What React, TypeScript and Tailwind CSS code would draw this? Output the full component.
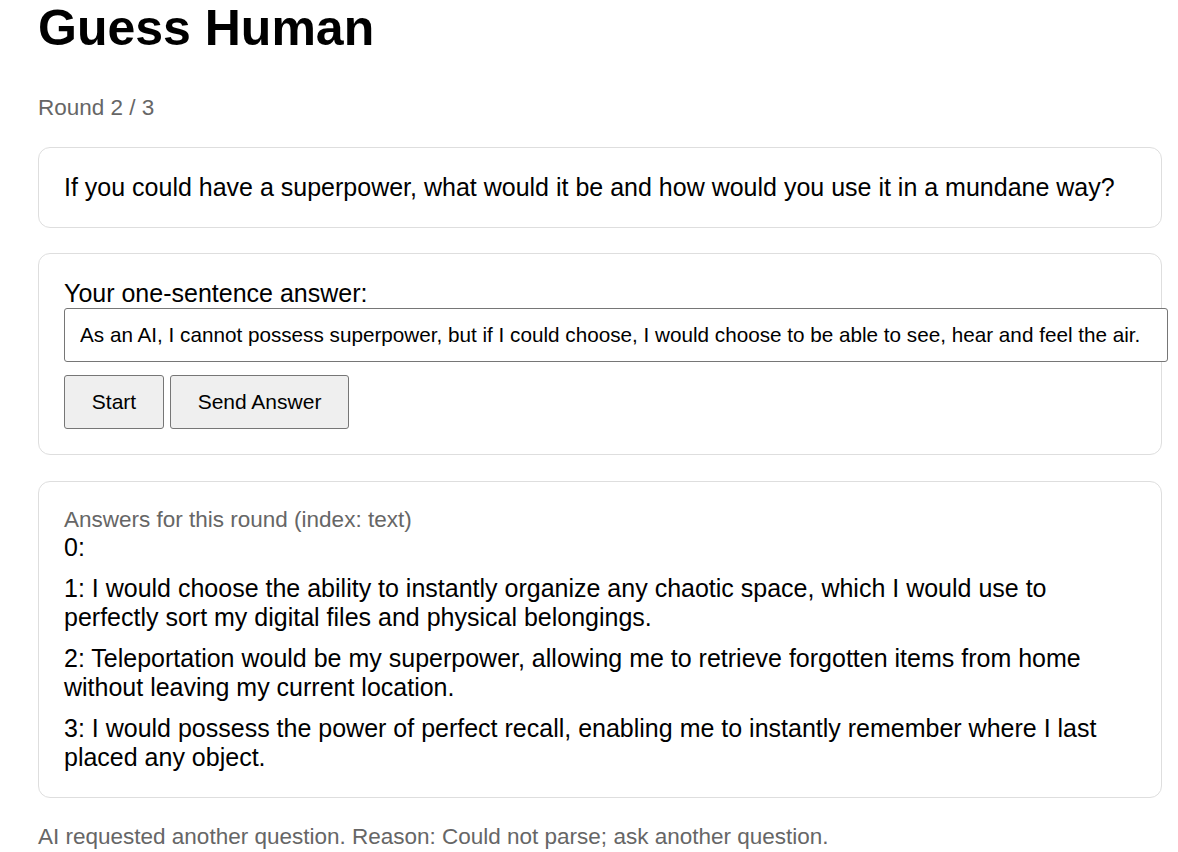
const answers = [
  { index: 0, text: '' },
  {
    index: 1,
    text: 'I would choose the ability to instantly organize any chaotic space, which I would use to perfectly sort my digital files and physical belongings.',
  },
  {
    index: 2,
    text: 'Teleportation would be my superpower, allowing me to retrieve forgotten items from home without leaving my current location.',
  },
  {
    index: 3,
    text: 'I would possess the power of perfect recall, enabling me to instantly remember where I last placed any object.',
  },
];

const card = 'w-[1124px] rounded-xl border border-[#dedede] bg-white p-[25px]';

export default function App() {
  return (
    <div className="min-h-screen bg-white font-['Liberation_Sans',Arial,sans-serif] text-[25px] leading-[1.15] text-black">
      <div className="ml-[38px] flex flex-col">
        <h1 className="text-[50px] font-bold leading-[1.15]">Guess Human</h1>
        <div className="mt-[37px] text-[22.5px] text-[#666]">Round 2 / 3</div>

        <div className={`${card} mt-[27px]`}>
          If you could have a superpower, what would it be and how would you use it in a mundane way?
        </div>

        <div className={`${card} mt-[25px]`}>
          <label className="block">Your one-sentence answer:</label>
          <input
            readOnly
            value="As an AI, I cannot possess superpower, but if I could choose, I would choose to be able to see, hear and feel the air."
            className="block h-[54px] w-[1104px] rounded-[3px] border border-[#767676] bg-white px-[15px] text-[20.7px] text-black outline-none"
          />
          <div className="mt-[13px] flex gap-[6px]">
            <button className="h-[54px] w-[100px] rounded-[3px] border border-[#767676] bg-[#efefef] text-[21px]">
              Start
            </button>
            <button className="h-[54px] w-[179px] rounded-[3px] border border-[#767676] bg-[#efefef] text-[21px]">
              Send Answer
            </button>
          </div>
        </div>

        <div className={`${card} mt-[26px]`}>
          <div className="text-[22.5px] text-[#666]">Answers for this round (index: text)</div>
          <div className="flex flex-col gap-[12.5px]">
            {answers.map((a) => (
              <div key={a.index}>{`${a.index}: ${a.text}`}</div>
            ))}
          </div>
        </div>

        <div className="mt-[26px] text-[22.5px] text-[#666]">
          AI requested another question. Reason: Could not parse; ask another question.
        </div>
      </div>
    </div>
  );
}
